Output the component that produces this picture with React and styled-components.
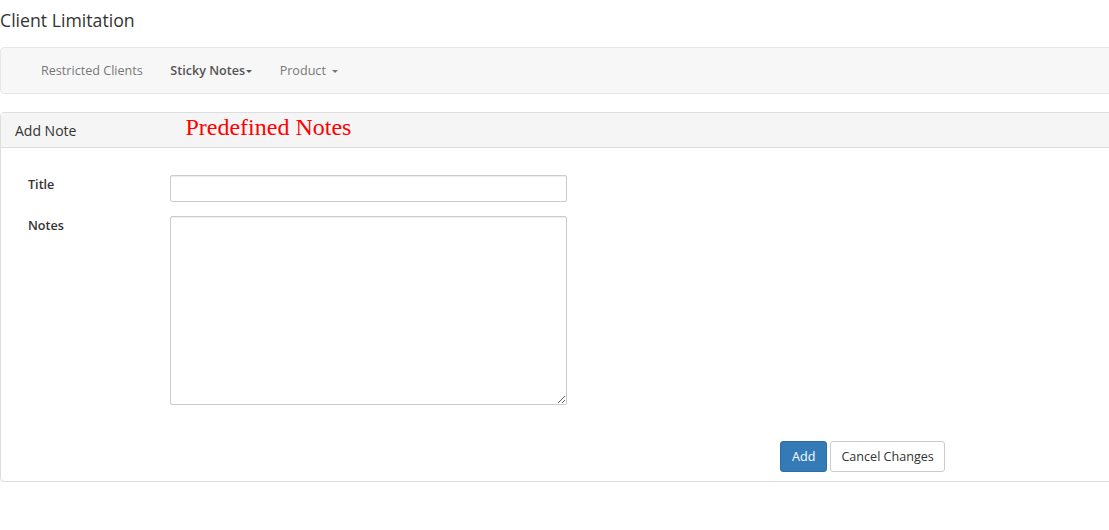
import React from 'react'
import styled, { createGlobalStyle } from 'styled-components'

const GlobalStyle = createGlobalStyle`
    body {
        margin: 0;
        background: #fff;
        font-family: "Open Sans", "Liberation Sans", sans-serif;
        color: #333;
    }
`

const Page = styled.div`
    width: 1125px;
`

const PageTitle = styled.h1`
    margin: 0;
    height: 47px;
    padding-top: 9px;
    box-sizing: border-box;
    font-size: 17.7px;
    font-weight: 400;
    color: #333;
    line-height: 22px;
`

const Navbar = styled.nav`
    height: 47px;
    box-sizing: border-box;
    background: #f7f7f7;
    border: 1px solid #e7e7e7;
    border-radius: 4px;
    display: flex;
    align-items: center;
    padding-left: 26px;
`

const NavItem = styled.a`
    padding: 0 13.5px 0 14px;
    font-size: 12.6px;
    color: ${p => (p.active ? '#555' : '#777')};
    font-weight: ${p => (p.active ? 600 : 400)};
    text-decoration: none;
    display: flex;
    align-items: center;
`

const Caret = styled.span`
    display: inline-block;
    width: 0;
    height: 0;
    margin-left: ${p => (p.gap ? '6px' : '1px')};
    margin-top: 1px;
    border-top: 3px solid currentColor;
    border-left: 3px solid transparent;
    border-right: 3px solid transparent;
`

const Panel = styled.section`
    margin-top: 18px;
    border: 1px solid #ddd;
    border-radius: 4px;
    box-shadow: 0 1px 1px rgba(0, 0, 0, 0.05);
`

const PanelHeading = styled.header`
    height: 35px;
    box-sizing: border-box;
    background: #f5f5f5;
    border-bottom: 1px solid #ddd;
    display: flex;
    align-items: center;
    padding-left: 14px;
    font-size: 14px;
    color: #333;
`

const RedNote = styled.span`
    margin-left: 109px;
    margin-top: -5px;
    font-family: "Liberation Serif", "Times New Roman", serif;
    font-size: 24px;
    color: #f00;
`

const PanelBody = styled.div`
    padding: 27px 0 9px 0;
`

const FormRow = styled.div`
    display: grid;
    grid-template-columns: 169px 397px;
    margin-bottom: 14px;
`

const Label = styled.label`
    padding-left: 27px;
    padding-top: 1px;
    font-size: 12.6px;
    font-weight: 600;
    color: #333;
`

const Input = styled.input`
    height: 27px;
    box-sizing: border-box;
    border: 1px solid #ccc;
    border-radius: 2px;
    box-shadow: inset 0 1px 1px rgba(0, 0, 0, 0.075);
    font: inherit;
    padding: 4px 8px;
`

const TextArea = styled.textarea`
    height: 189px;
    box-sizing: border-box;
    border: 1px solid #ccc;
    border-radius: 2px;
    box-shadow: inset 0 1px 1px rgba(0, 0, 0, 0.075);
    font: inherit;
    padding: 4px 8px;
    resize: vertical;
`

const Actions = styled.div`
    display: flex;
    gap: 3px;
    padding-left: 779px;
    margin-top: 36px;
`

const Button = styled.button`
    height: 31px;
    box-sizing: border-box;
    padding: 0 ${p => (p.primary ? 11 : 10)}px;
    font-family: "Open Sans", "Liberation Sans", sans-serif;
    font-size: 12.6px;
    border-radius: 3px;
    border: 1px solid ${p => (p.primary ? '#2e6da4' : '#ccc')};
    background: ${p => (p.primary ? '#337ab7' : '#fff')};
    color: ${p => (p.primary ? '#fff' : '#333')};
`

const App = () => {
    return (
        <Page>
            <GlobalStyle />
            <PageTitle>Client Limitation</PageTitle>
            <Navbar>
                <NavItem>Restricted Clients</NavItem>
                <NavItem active>Sticky Notes<Caret /></NavItem>
                <NavItem>Product<Caret gap /></NavItem>
            </Navbar>
            <Panel>
                <PanelHeading>
                    Add Note
                    <RedNote>Predefined Notes</RedNote>
                </PanelHeading>
                <PanelBody>
                    <FormRow>
                        <Label>Title</Label>
                        <Input type="text" />
                    </FormRow>
                    <FormRow>
                        <Label>Notes</Label>
                        <TextArea />
                    </FormRow>
                    <Actions>
                        <Button primary>Add</Button>
                        <Button>Cancel Changes</Button>
                    </Actions>
                </PanelBody>
            </Panel>
        </Page>
    )
}

export default App
